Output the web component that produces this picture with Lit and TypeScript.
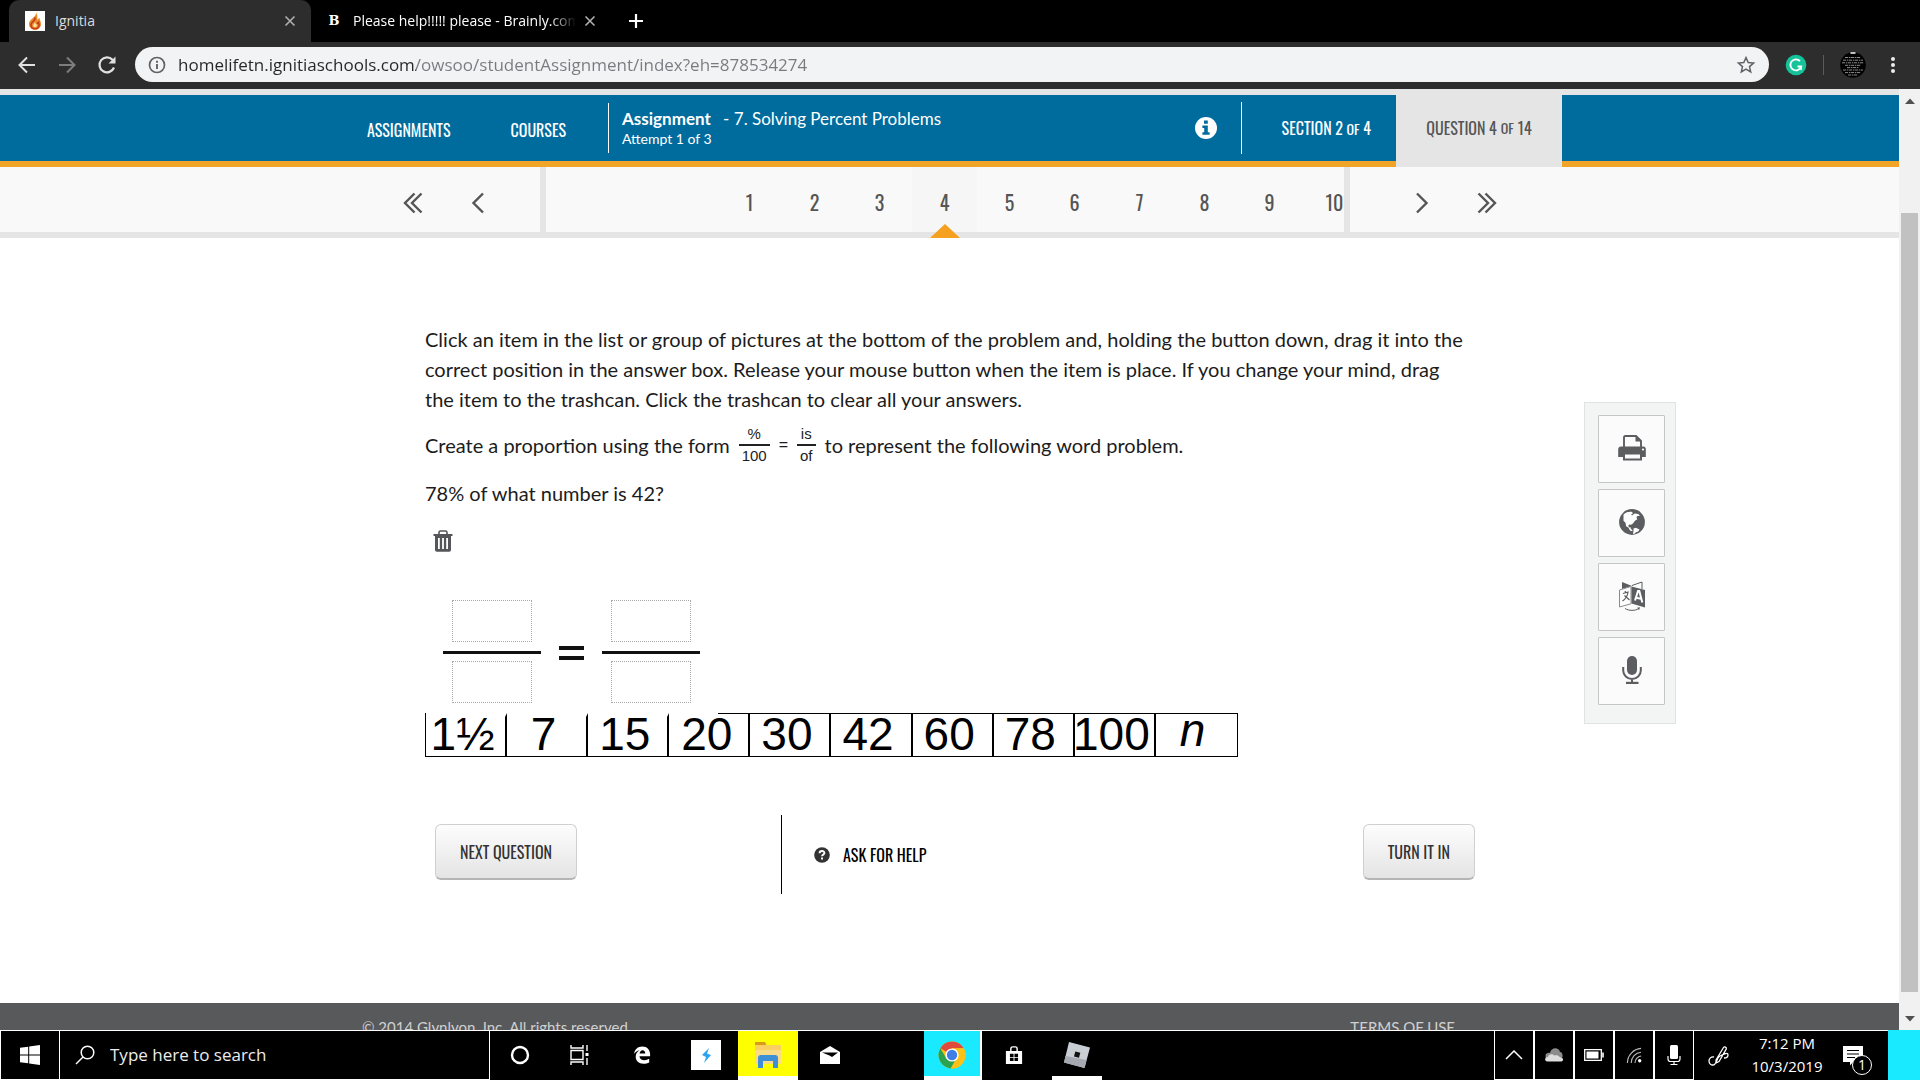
import { LitElement, html, css, svg, nothing } from "lit";
import { customElement, state } from "lit/decorators.js";
import { classMap } from "lit/directives/class-map.js";

const arrowBack = svg`<svg viewBox="0 0 20 20" width="20" height="20" aria-hidden="true"><path d="M18 10H3M10 2.5 2.5 10l7.500 7.500" fill="none" stroke="currentColor" stroke-width="2"/></svg>`;
const arrowForward = svg`<svg viewBox="0 0 20 20" width="20" height="20" aria-hidden="true"><path d="M2 10h15M10 2.500 17.500 10 10 17.500" fill="none" stroke="currentColor" stroke-width="2"/></svg>`;
const reload = svg`<svg viewBox="0 0 20 20" width="20" height="20" aria-hidden="true"><path d="M17 12.500A7.500 7.500 0 1 1 15.500 4.700L17 6.500" fill="none" stroke="currentColor" stroke-width="2.200"/><path d="M18.500 1.500v7h-7z" fill="currentColor"/></svg>`;
const cross = svg`<svg viewBox="0 0 12 12" width="12" height="12" aria-hidden="true"><path d="M1.500 1.500l9 9M10.500 1.500l-9 9" fill="none" stroke="currentColor" stroke-width="1.600"/></svg>`;
const plus = svg`<svg viewBox="0 0 16 16" width="16" height="16" aria-hidden="true"><path d="M8 1v14M1 8h14" fill="none" stroke="currentColor" stroke-width="2.200"/></svg>`;
const siteInfo = svg`<svg viewBox="0 0 18 18" width="18" height="18" aria-hidden="true"><circle cx="9" cy="9" r="7.500" fill="none" stroke="#5f6368" stroke-width="1.700"/><path d="M9 8v5M9 4.800v1.900" stroke="#5f6368" stroke-width="1.900"/></svg>`;
const star = svg`<svg viewBox="0 0 20 20" width="20" height="20" aria-hidden="true"><path d="M10 2.500l2.200 5 5.400.500-4.100 3.600 1.200 5.300L10 14.100l-4.700 2.800 1.200-5.300L2.400 8l5.400-.500z" fill="none" stroke="#5f6368" stroke-width="1.500"/></svg>`;
const flame = svg`<svg viewBox="0 0 20 20" width="20" height="20" aria-hidden="true"><path d="M0 0h20v20H0z" fill="#fff"/><path d="M11 1.500C12 6 4 7.500 4 13c0 3.500 2.700 5.800 6 5.800s6-2.300 6-5.800c0-2.600-1.500-4-1.500-6-1.200.500-2 1.500-2 2.800C12 7 13 4 11 1.500z" fill="#e88a2c"/><path d="M9.500 6.500c2.500 3-3.500 3.500-3.500 7.500 0 2 1.600 3.800 4 3.800s4.100-1.700 4.100-3.800c0-1.100-.600-1.800-.600-2.800-.900.400-1.200 1-1.200 1.900" fill="none" stroke="#c63f1d" stroke-width="1.600"/><path d="M10 11c0 1.300-1.700 1.800-1.700 3.400a1.800 1.800 0 0 0 3.600 0c0-1-1.900-1.800-1.900-3.400z" fill="#f9e3a0"/></svg>`;
const grammarly = svg`<svg viewBox="0 0 22 22" width="22" height="22" aria-hidden="true"><circle cx="11" cy="11" r="10.300" fill="#15c39a"/><path d="M15 7.200A5.500 5.500 0 1 0 16.200 12.500H12.500" fill="none" stroke="#fff" stroke-width="1.800"/><path d="M16.800 12v4.500l-3.300-2z" fill="#fff"/></svg>`;
const avatar = svg`<svg viewBox="0 0 26 26" width="26" height="26" aria-hidden="true"><circle cx="13" cy="13" r="12.800" fill="#000"/><path d="M10.500 1h5" stroke="#fff" stroke-width="1.500"/><path d="M5 5.500h16M3 8.200h20M2 10.800h22M5 13.300h16M7 15.600h12M3 18h20M5 20.600h16M8 23h10" stroke="#9a9a9a" stroke-width=".9" stroke-dasharray="3 .8 1.600 .6"/></svg>`;
const dots = svg`<svg viewBox="0 0 6 20" width="6" height="20" aria-hidden="true"><g fill="#ededed"><circle cx="3" cy="4" r="2"/><circle cx="3" cy="10" r="2"/><circle cx="3" cy="16" r="2"/></g></svg>`;

const infoDot = svg`<svg viewBox="0 0 22 22" width="22" height="22" aria-hidden="true"><circle cx="11" cy="11" r="11" fill="#fff"/><path d="M9 3.600h3.800v3.200H9zM7.400 8.500h5.400v6.800h1.800v2.400H7.400v-2.400h1.800V11H7.400z" fill="#006c9e"/></svg>`;
const chevrons = (n: number, flip: boolean) => svg`<svg viewBox="0 0 20 22" width="20" height="22" aria-hidden="true"><g fill="none" stroke="#555" stroke-width="2.400" transform=${flip ? "matrix(-1 0 0 1 20 0)" : "matrix(1 0 0 1 0 0)"}>${n === 2
  ? svg`<path d="M11.500 1.500 2 11l9.500 9.500M18.500 1.500 9 11l9.500 9.500"/>`
  : svg`<path d="M15 1.500 5.500 11l9.500 9.500"/>`}</g></svg>`;
const trash = svg`<svg viewBox="0 0 20 22" width="20" height="22" aria-hidden="true"><path d="M6 4V2.500C6 1.500 6.500 1 7.500 1h5c1 0 1.500.500 1.500 1.500V4" fill="none" stroke="#55565a" stroke-width="1.600"/><path d="M.5 4h19v2h-19z" fill="#55565a"/><path d="M2 6h16v14a1.800 1.800 0 0 1-1.800 1.800H3.800A1.800 1.800 0 0 1 2 20zM5 8v11h1.800V8zm4.100 0v11h1.800V8zm4.100 0v11H15V8z" fill="#55565a" fill-rule="evenodd"/></svg>`;
const helpDot = svg`<svg viewBox="0 0 16 16" width="16" height="16" aria-hidden="true"><circle cx="8" cy="8" r="7.800" fill="#333"/><path d="M5.600 6.300C5.600 3.300 10.400 3.300 10.400 6 10.400 7.700 8 7.500 8 9.300" fill="none" stroke="#fff" stroke-width="1.900"/><path d="M7 10.600h2v2H7z" fill="#fff"/></svg>`;

const printer = svg`<svg viewBox="0 0 28 26" width="28" height="26" aria-hidden="true"><path d="M6 12V2.200C6 1.500 6.500 1 7.200 1H18l5 5v6" fill="none" stroke="#5c5d60" stroke-width="1.900"/><path d="M17.500 1v5.500H23z" fill="#5c5d60"/><path d="M3 11.500h22.500c1.300 0 2.300 1 2.300 2.300V22H24v3.500H5V22H.2v-7.700c0-1.600 1.200-2.800 2.800-2.800zM7 19.500v4h15v-4z" fill="#5c5d60" fill-rule="evenodd"/><circle cx="25" cy="14.500" r="1.100" fill="#fff"/></svg>`;
const globe = svg`<svg viewBox="0 0 26 26" width="26" height="26" aria-hidden="true"><circle cx="13" cy="13" r="12.900" fill="#5c5d60"/><path d="M4.500 5.500C7 3 10 2.500 12.500 2.800l1.700 1.400-2 1 .8 1.300 2.600-2 3.800.600 1.500 2-2.500-.2-1 1.800 1 1.500-2.200 1.300-2.300 3-1.700 1.300-1.700-.3-1.300 1.300.8 1.400 1.700.2.200 1.600 1.500 1-.2 1.300L11 21.500l-1.600-3-2.300-1.200-.6-3.500-2-2z" fill="#fff"/><path d="M14.500 19.500l2.500-.8 2.300 1.300 1.200.2-1.300 2.300-2.200.8-1.500 1.400-1.500.3.500-3z" fill="#fff"/></svg>`;
const translate = svg`<svg viewBox="0 0 28 30" width="28" height="30" aria-hidden="true"><path d="M4 1l10 4-10 3z" fill="#5c5d60"/><path d="M14 4.500 24 1v7" fill="none" stroke="#5c5d60"/><path d="M1.500 9 13 5.500v17.300L1.500 26z" fill="#fff" stroke="#8a8b8d"/><path d="M13.500 5.500 27 9v17.500l-13.500-4z" fill="#5c5d60"/><path d="M5 12.500l5-1.500c-.5 4-2.500 7-5.500 9M7 10l.8 2M6.500 14.500l5 4.500" fill="none" stroke="#5c5d60" stroke-width="1.200"/><path d="M17 19.500l3-9.500h1.300l3 11.500M18 16.800l5 1" fill="none" stroke="#fff" stroke-width="2"/><path d="M7 27.500c4 2.500 10 2.500 14 0" fill="none" stroke="#5c5d60"/><path d="M19 26.800l3-.6-.8 2.800z" fill="#5c5d60"/></svg>`;
const microphone = svg`<svg viewBox="0 0 20 28" width="20" height="28" aria-hidden="true"><rect x="5" y="0" width="10" height="19" rx="5" fill="#5c5d60"/><path d="M1.200 11v3.500a8.800 8.400 0 0 0 17.600 0V11M10 23v4" fill="none" stroke="#5c5d60" stroke-width="2"/><path d="M4 25.800h12.500V28H4z" fill="#5c5d60"/></svg>`;

const scrollArrow = (d: string) => svg`<svg viewBox="0 0 10 6" width="10" height="6" aria-hidden="true"><path d=${d} fill="#505050"/></svg>`;

const windows = svg`<svg viewBox="0 0 20 20" width="20" height="20" aria-hidden="true"><path d="M0 2.800 8.200 1.700v7.800H0zM9.200 1.500 20 0v9.500H9.200zM0 10.500h8.200v7.800L0 17.200zM9.200 10.500H20V20L9.200 18.500z" fill="#fff"/></svg>`;
const magnifier = svg`<svg viewBox="0 0 20 20" width="20" height="20" aria-hidden="true"><circle cx="12.500" cy="7.500" r="6.300" fill="none" stroke="#fff" stroke-width="1.500"/><path d="M8 12 1 19" stroke="#fff" stroke-width="1.500"/></svg>`;
const cortana = svg`<svg viewBox="0 0 20 20" width="20" height="20" aria-hidden="true"><circle cx="10" cy="10" r="8" fill="none" stroke="#fff" stroke-width="2.400"/></svg>`;
const taskView = svg`<svg viewBox="0 0 22 20" width="22" height="20" aria-hidden="true"><path d="M2 0v3h12V0M2 20v-3h12v3M2 5.500h12v9H2zM18 0v6M18 13v7" fill="none" stroke="#fff" stroke-width="1.400"/><path d="M16.500 8h3v3h-3z" fill="#fff"/></svg>`;
const edge = svg`<svg viewBox="0 0 20 20" width="18" height="18" aria-hidden="true"><path d="M1 9C2 3.500 5.500.5 10.300.5c5.500 0 8.700 3.800 8.700 8.700v2.300H7.200c.2 3 2.500 4.300 5.400 4.300 2 0 3.800-.5 5.400-1.500v3.900c-1.800 1-4 1.500-6.400 1.500C6.400 19.700 3 16.500 3 12c0-3 1.500-5.600 4.200-7.200C4.500 5.300 2.200 7 1 9zm6.400-.8h6.200c0-2.200-1-3.600-3-3.600-1.800 0-2.900 1.500-3.200 3.600z" fill="#fff"/></svg>`;
const bolt = svg`<svg viewBox="0 0 30 30" width="30" height="30" aria-hidden="true"><path d="M0 0h30v30H0z" fill="#fff"/><path d="M18 8l-7 7 4 2-2 6 7-8-4-1.500z" fill="#2fa4ee"/></svg>`;
const folder = svg`<svg viewBox="0 0 28 26" width="28" height="26" aria-hidden="true"><path d="M1 0h10l2 4h-12z" fill="#d99a1c"/><path d="M1 3h26v19H1z" fill="#f8cf60"/><path d="M1 8h26v14H1z" fill="#fbdc86"/><path d="M4 26V16c0-2 1-3 3-3h14c2 0 3 1 3 3v10h-5v-7H9v7z" fill="#3d8fd6"/></svg>`;
const mail = svg`<svg viewBox="0 0 20 18" width="20" height="18" aria-hidden="true"><path d="M0 6 10 0l10 6v12H0z" fill="#fff"/><path d="M2 6.500h16L12 11l-2.500-1.500z" fill="#000"/></svg>`;
const chrome = svg`<svg viewBox="0 0 28 28" width="28" height="28" aria-hidden="true"><circle cx="14" cy="14" r="13.500" fill="#fbc116"/><path d="M14 14 2.300 7.250A13.500 13.500 0 0 1 25.700 7.250H14z" fill="#de4a3b"/><path d="M2.300 7.250A13.500 13.500 0 0 0 12.500 27.400L19 16.500 14 20 8.500 17.500z" fill="#2aa24f"/><path d="M25.700 7.250H14L20 14l-6.500 13.500A13.500 13.500 0 0 0 25.700 7.250z" fill="#fbc116"/><circle cx="14" cy="14" r="6.600" fill="#fff"/><circle cx="14" cy="14" r="5.200" fill="#3f7ee8"/></svg>`;
const store = svg`<svg viewBox="0 0 20 20" width="18" height="20" aria-hidden="true"><path d="M6.500 6V3c0-1.200.8-2 2-2h3c1.200 0 2 .8 2 2v3" fill="none" stroke="#fff" stroke-width="1.600"/><path d="M1 5.500h18V20H1zM5.500 8.500v3.600h4V8.500zm5 0v3.600h4V8.500zm-5 4.600v3.600h4v-3.600zm5 0v3.600h4v-3.600z" fill="#fff" fill-rule="evenodd"/></svg>`;
const roblox = svg`<svg viewBox="0 0 28 28" width="28" height="28" aria-hidden="true"><path d="M6 1l21 5.500L21.500 27 1 21.500z" fill="#c9cdd4"/><path d="M1 21.500 21.500 27l2-8-21-4z" fill="#a4a9b2"/><path d="M12.300 10.500l5 1.300-1.300 5-5-1.300z" fill="#111"/></svg>`;

const trayUp = svg`<svg viewBox="0 0 18 10" width="18" height="10" aria-hidden="true"><path d="M1 9l8-8 8 8" fill="none" stroke="#fff" stroke-width="1.500"/></svg>`;
const cloud = svg`<svg viewBox="0 0 20 14" width="20" height="14" aria-hidden="true"><path d="M2 10C0 6 4 4 6 5c1-6 9-6 10-1 3 0 3 5 2 6z" fill="#8c8c8c"/><path d="M3 13.500c-3-1-2-5 1-4.500C5 5.500 9 6 10 7.500c5-1 5 2 8 2.500 2 1 1 3.500-1 3.500z" fill="#ddd"/></svg>`;
const battery = svg`<svg viewBox="0 0 20 12" width="20" height="12" aria-hidden="true"><path d="M.7.700h16.600v10.600H.7z" fill="none" stroke="#fff" stroke-width="1.300"/><path d="M2.500 2.500h12v7h-12zM18.200 3.500h1.600v5h-1.600z" fill="#fff"/></svg>`;
const wifi = svg`<svg viewBox="0 0 18 18" width="17" height="17" aria-hidden="true"><path d="M1.500 17A15.500 15.500 0 0 1 16 1.500M5.500 17A11.500 11.500 0 0 1 16 5.500M9.500 17A7.500 7.500 0 0 1 16 9.500" fill="none" stroke="#bbb" stroke-width="1.200"/><circle cx="14.500" cy="14.500" r="1.800" fill="#fff"/></svg>`;
const trayMic = svg`<svg viewBox="0 0 14 20" width="14" height="20" aria-hidden="true"><rect x="3" y="0" width="8" height="14" rx="1.500" fill="#fff"/><path d="M1 11v3c0 1.500 1 2.500 2.500 2.500h7c1.500 0 2.500-1 2.500-2.500v-3M7 16.500V20M3.500 19.500h7" fill="none" stroke="#fff" stroke-width="1.200"/></svg>`;
const pen = svg`<svg viewBox="0 0 22 22" width="22" height="22" aria-hidden="true"><path d="M8 15 15.500 2.500c1-1.500 3.500 0 2.700 1.700L11 16.500 8 18zM6 12c-3-.5-5 1.500-5 4s2 4 4 4c4 0 3-7 7-9s8-4 8-1-3 3-4 3" fill="none" stroke="#fff" stroke-width="1.300"/></svg>`;
const note = svg`<svg viewBox="0 0 20 20" width="20" height="20" aria-hidden="true"><path d="M0 0h20v16H10l-3 3.500V16H0z" fill="#fff"/><path d="M4 4.500h12M4 8h12M4 11.500h8" stroke="#000" stroke-width="1.200"/></svg>`;

const TILES = ["1½", "7", "15", "20", "30", "42", "60", "78", "100", "n"];
const TOOLS = [
  { label: "Print", icon: printer },
  { label: "Web", icon: globe },
  { label: "Translate", icon: translate },
  { label: "Record", icon: microphone },
];
const TRAY = [
  { label: "Show hidden icons", icon: trayUp },
  { label: "Cloud storage", icon: cloud },
  { label: "Battery", icon: battery },
  { label: "Network", icon: wifi },
  { label: "Microphone", icon: trayMic },
];
const APPS = [
  { label: "Cortana", icon: cortana, kind: "plain" },
  { label: "Task view", icon: taskView, kind: "plain" },
  { label: "Edge", icon: edge, kind: "wide" },
  { label: "Lightning", icon: bolt, kind: "wide" },
  { label: "File Explorer", icon: folder, kind: "yellow" },
  { label: "Mail", icon: mail, kind: "wide" },
  { label: "", icon: nothing, kind: "gap" },
  { label: "Chrome", icon: chrome, kind: "cyan" },
  { label: "Store", icon: store, kind: "wide" },
  { label: "Roblox", icon: roblox, kind: "running" },
];

const reset = css`
  *, *::before, *::after { box-sizing: border-box; }
  button { font: inherit; color: inherit; background: none; border: 0; padding: 0; margin: 0; cursor: pointer; }
  a { color: inherit; text-decoration: none; }
  svg { display: block; flex: none; }
`;

@customElement("browser-chrome")
export class BrowserChrome extends LitElement {
  static styles = [reset, css`
    :host { display: block; flex: none; font: 15px/20px "Open Sans", "Noto Sans", sans-serif; color: #fff; }
    .tabs { display: flex; height: 42px; background: #000; padding-left: 9px; }
    .tab { display: flex; align-items: center; padding: 0 16px; width: 302px; gap: 10px; }
    .tab.active { background: #2d2d2d; border-radius: 10px 10px 0 0; color: #dcdcdc; padding-right: 15px; }
    .tab.other { width: 301px; gap: 12px; margin-right: 16px; }
    .title { flex: 1; overflow: hidden; white-space: nowrap; font-size: 14px; }
    .fade { -webkit-mask-image: linear-gradient(to right, #000 88%, transparent); mask-image: linear-gradient(to right, #000 88%, transparent); }
    .close { color: #b0b0b0; }
    .other .close { margin-left: -4px; }
    .brand { font: bold 13px/20px "DejaVu Serif", serif; width: 14px; text-align: center; }
    .bar { display: flex; align-items: center; height: 47px; background: #2d2d2d; padding: 0 24px 2px 17px; }
    .nav { display: flex; gap: 20px; color: #e0e0e0; padding-right: 18px; }
    .dim { color: #7d7d7d; }
    .address { flex: 1; display: flex; align-items: center; gap: 12px; height: 35px; border-radius: 18px; background: #f1f3f4; padding: 0 13px; margin: 0 16px 0 0; }
    .url { flex: 1; min-width: 0; font: 17px/24px "Open Sans", "Noto Sans", sans-serif; border: 0; outline: 0; padding: 0; -webkit-text-fill-color: transparent; background: linear-gradient(to right, #24262a 238px, #777b80 238px); -webkit-background-clip: text; background-clip: text; }
    .ext { display: flex; align-items: center; gap: 16px; }
    .rule { width: 1px; height: 20px; background: #5a5a5a; }
    .menu { margin-left: 8px; }
  `];
  render() {
    return html`
      <div class="tabs">
        <div class="tab active">${flame}<span class="title">Ignitia</span><button class="close" aria-label="Close tab">${cross}</button></div>
        <div class="tab other"><span class="brand">B</span><span class="title fade">Please help!!!!! please - Brainly.com</span><button class="close" aria-label="Close tab">${cross}</button></div>
        <button aria-label="New tab">${plus}</button>
      </div>
      <div class="bar">
        <div class="nav">
          <button aria-label="Back">${arrowBack}</button>
          <button class="dim" aria-label="Forward">${arrowForward}</button>
          <button aria-label="Reload">${reload}</button>
        </div>
        <div class="address">
          ${siteInfo}
          <input class="url" aria-label="Address" value="homelifetn.ignitiaschools.com/owsoo/studentAssignment/index?eh=878534274">
          <button aria-label="Bookmark">${star}</button>
        </div>
        <div class="ext">
          <button aria-label="Grammarly">${grammarly}</button>
          <span class="rule"></span>
          <button aria-label="Profile">${avatar}</button>
          <button class="menu" aria-label="Menu">${dots}</button>
        </div>
      </div>`;
  }
}

@customElement("assignment-header")
export class AssignmentHeader extends LitElement {
  static styles = [reset, css`
    :host { display: block; flex: none; font: 16px/24px Oswald, "Roboto Condensed", sans-serif; }
    .blue { background: linear-gradient(#e5e5e5 6px, #006c9e 6px, #006c9e 72px, #f0a428 72px); display: flex; justify-content: center; height: 78px; }
    .wrap { width: 1225px; display: flex; align-items: center; color: #fff; }
    .link { padding: 3px 30px 0; }
    .info { border-left: 1px solid #fff; padding-left: 13px; height: 50px; margin-left: 12px; flex: 1; font-family: Lato, sans-serif; font-size: 17px; line-height: 24px; }
    .info p { margin: 4px 0 0; }
    .info b { margin-right: 8px; }
    .info small { display: block; font-size: 14px; line-height: 16px; }
    .more { padding-right: 24px; height: 52px; border-right: 1px solid #fff; }
    .section { padding: 0 25px 0 40px; }
    .small { font-size: 14px; }
    .question { align-self: stretch; display: flex; align-items: center; gap: 4px; background: #e5e5e5; color: #555; width: 166px; justify-content: center; }
    .pager { display: flex; justify-content: center; background: #f9f9f9; border-bottom: 6px solid #e5e5e5; height: 71px; }
    .row { width: 1225px; display: flex; align-items: stretch; color: #555; }
    .ends { display: flex; align-items: center; gap: 45px; padding-top: 6px; }
    .first { width: 203px; padding-left: 66px; }
    .last { padding-left: 62px; }
    .numbers { display: flex; width: 810px; border: solid #e5e5e5; border-width: 0 6px; padding-left: 171px; }
    .clip { display: flex; overflow: clip; overflow-clip-margin: 6px; flex: 1; }
    .num { position: relative; flex: none; width: 65px; font-size: 20px; padding-top: 4px; }
    .num.on { background: #f6f6f6; }
    .num.on::after { content: ""; position: absolute; left: 18px; bottom: -6px; border: solid transparent; border-width: 0 15px 14px; border-bottom-color: #f5a11f; }
  `];
  @state() private current = 4;
  render() {
    const numbers = Array.from({ length: 10 }, (_, i) => i + 1);
    return html`
      <header class="blue"><div class="wrap">
        <a class="link" href="#assignments">ASSIGNMENTS</a>
        <a class="link" href="#courses">COURSES</a>
        <div class="info"><p><b>Assignment</b> - 7. Solving Percent Problems</p><small>Attempt 1 of 3</small></div>
        <button class="more" aria-label="Assignment information">${infoDot}</button>
        <a class="section" href="#section">SECTION 2 <span class="small">OF</span> 4</a>
        <a class="question" href="#question">QUESTION ${this.current} <span class="small">OF</span> 14</a>
      </div></header>
      <nav class="pager" aria-label="Questions"><div class="row">
        <div class="ends first">
          <button aria-label="First question">${chevrons(2, false)}</button>
          <button aria-label="Previous question">${chevrons(1, false)}</button>
        </div>
        <div class="numbers"><div class="clip">
          ${numbers.map((n) => html`<button class=${classMap({ num: true, on: n === this.current })} @click=${() => { this.current = n; }}>${n}</button>`)}
        </div></div>
        <div class="ends last">
          <button aria-label="Next question">${chevrons(1, true)}</button>
          <button aria-label="Last question">${chevrons(2, true)}</button>
        </div>
      </div></nav>`;
  }
}

@customElement("problem-view")
export class ProblemView extends LitElement {
  static styles = [reset, css`
    :host { flex: 1; display: grid; grid-template-columns: 1fr 1225px 1fr; background: #fff; color: #1c1c1c; font: 20px/30px Lato, sans-serif; }
    .problem { grid-column: 2; width: 1138px; padding: 86px 0 0 88px; }
    p { margin: 0; max-width: 1044px; }
    .form { display: flex; align-items: center; margin: 10px 0 12px; gap: 9px; height: 42px; }
    .ratio { display: flex; flex-direction: column; align-items: center; font: 15px/20px "Liberation Sans", sans-serif; }
    .ratio span { padding: 0 3px; }
    .ratio span:first-child { border-bottom: 2px solid #222; align-self: stretch; text-align: center; }
    .eq { font: 16px/20px "Liberation Sans", sans-serif; }
    .trash { display: block; margin: 22px 0 48px 8px; }
    .answer { display: flex; align-items: center; gap: 18px; padding-left: 18px; margin-bottom: 10px; }
    .frac { display: grid; justify-items: center; width: 98px; }
    .slot { width: 80px; height: 42px; border: 1px dotted #aaa; }
    .bar { width: 98px; height: 3px; margin: 9px 0 7px; background: #111; }
    .equals { width: 25px; height: 14px; border: solid #111; border-width: 4px 0; margin-top: 2px; }
    .tiles { display: grid; grid-template-columns: repeat(10, minmax(0, 1fr)); width: 813px; height: 44px; border: 1px solid #000; }
    .tile { display: flex; justify-content: center; padding-right: 6px; border-right: 2px solid #000; font: 46px/40px "Liberation Sans", sans-serif; color: #000; background: #fff; }
    .tile:last-child { border-right: 0; font-style: italic; line-height: 32px; padding-right: 8px; }
    .bare { margin-top: -1px; border-top: 4px solid #fff; line-height: 34px; }
    .half { border-top: 1px solid; border-image: linear-gradient(to right, #fff 60%, #000 60%) 1; border-right: 0; box-shadow: inset -2px 0 #000; margin-top: -1px; }
    .actions { display: flex; align-items: flex-start; margin-top: 58px; padding-left: 10px; height: 79px; font: 16px/24px Oswald, "Roboto Condensed", sans-serif; }
    .push { height: 56px; margin-top: 9px; padding: 0 24px; border: 1px solid #d0d0d0; border-bottom: 2px solid #b5b5b5; border-radius: 6px; background: linear-gradient(#fdfdfd, #e4e4e4); color: #333; }
    .help { display: flex; align-items: center; gap: 13px; align-self: stretch; margin-left: 204px; padding-left: 32px; border-left: 1px solid #000; color: #000; }
    .turn { margin-left: auto; }
    .tools { grid-column: 3; justify-self: start; align-self: start; margin: 164px 0 0 22px; width: 92px; display: grid; gap: 6px; padding: 12px 10px 18px 13px; background: #f3f5f5; border: 1px solid #e0e3e3; }
    .tool { display: grid; place-items: center; height: 68px; border: 1px solid #c4c6c8; border-radius: 1px; background: #fbfbfb; padding-bottom: 2px; }
  `];
  render() {
    return html`
      <section class="problem">
        <p>Click an item in the list or group of pictures at the bottom of the problem and, holding the button down, drag it into the correct position in the answer box. Release your mouse button when the item is place. If you change your mind, drag the item to the trashcan. Click the trashcan to clear all your answers.</p>
        <div class="form">
          <span>Create a proportion using the form</span>
          <span class="ratio"><span>%</span><span>100</span></span>
          <span class="eq">=</span>
          <span class="ratio"><span>is</span><span>of</span></span>
          <span>to represent the following word problem.</span>
        </div>
        <p>78% of what number is 42?</p>
        <button class="trash" aria-label="Clear all answers">${trash}</button>
        <div class="answer">
          <div class="frac"><button class="slot" aria-label="Left numerator"></button><div class="bar"></div><button class="slot" aria-label="Left denominator"></button></div>
          <div class="equals"></div>
          <div class="frac"><button class="slot" aria-label="Right numerator"></button><div class="bar"></div><button class="slot" aria-label="Right denominator"></button></div>
        </div>
        <div class="tiles">
          ${TILES.map((t, i) => html`<button draggable="true" class=${classMap({ tile: true, bare: i < 3, half: i === 3 })}>${t}</button>`)}
        </div>
        <div class="actions">
          <button class="push">NEXT QUESTION</button>
          <button class="help">${helpDot}<span>ASK FOR HELP</span></button>
          <button class="push turn">TURN IT IN</button>
        </div>
      </section>
      <aside class="tools">
        ${TOOLS.map((t) => html`<button class="tool" aria-label=${t.label}>${t.icon}</button>`)}
      </aside>`;
  }
}

@customElement("task-bar")
export class TaskBar extends LitElement {
  static styles = [reset, css`
    :host { display: flex; flex: none; height: 50px; background: #000; color: #fff; font: 15px/23px "Open Sans", "Noto Sans", sans-serif; border-top: 1px solid #fff; }
    .start { width: 60px; border: solid #fff; border-width: 0 1px 1px; display: grid; place-items: center; }
    .search { display: flex; align-items: center; gap: 15px; width: 430px; padding: 0 15px; border: solid #fff; border-width: 0 1px 1px 0; }
    .search input { flex: 1; min-width: 0; background: none; border: 0; outline: 0; padding: 0; color: #fff; font: 17px/24px "Open Sans", "Noto Sans", sans-serif; }
    .search input::placeholder { color: #ececec; opacity: 1; }
    .apps { display: flex; flex: 1; }
    .app { display: grid; place-items: center; width: 60px; border-bottom: 4px solid transparent; padding-top: 2px; }
    .wide { width: 64px; }
    .gap { width: 62px; }
    .yellow, .cyan, .running { border-bottom-color: #fff; background-clip: padding-box; }
    .yellow { background-color: #ffff00; }
    .cyan { width: 58px; background-color: #19eaff; border-right: 2px solid #fff; }
    .running { width: 50px; margin-left: 6px; }
    .tray { display: flex; }
    .cell { width: 40px; display: grid; place-items: center; border: solid #fff; border-width: 0 1px 1px; }
    .ink { width: 50px; display: grid; place-items: center; }
    .clock { display: grid; align-content: center; text-align: center; width: 86px; padding-bottom: 2px; }
    .notes { position: relative; width: 58px; padding-left: 13px; }
    .badge { position: absolute; left: 22px; top: 24px; width: 20px; height: 20px; border: 1px solid #fff; border-radius: 50%; background: #000; font-size: 14px; line-height: 18px; text-align: center; }
    .show { width: 32px; background: #19eaff; margin-top: -1px; }
  `];
  render() {
    return html`
      <button class="start" aria-label="Start">${windows}</button>
      <label class="search">${magnifier}<input aria-label="Type here to search" placeholder="Type here to search"></label>
      <div class="apps">
        ${APPS.map((a) => a.kind === "gap"
          ? html`<span class="gap"></span>`
          : html`<button class="app ${a.kind}" aria-label=${a.label}>${a.icon}</button>`)}
      </div>
      <div class="tray">
        ${TRAY.map((t) => html`<button class="cell" aria-label=${t.label}>${t.icon}</button>`)}
        <button class="ink" aria-label="Ink workspace">${pen}</button>
        <div class="clock"><span>7:12 PM</span><span>10/3/2019</span></div>
        <button class="notes" aria-label="Notifications">${note}<span class="badge">1</span></button>
        <button class="show" aria-label="Show desktop"></button>
      </div>`;
  }
}

@customElement("app-root")
export class AppRoot extends LitElement {
  static styles = [reset, css`
    :host { display: flex; flex-direction: column; height: 100vh; overflow: hidden; }
    .viewport { flex: 1; min-height: 0; display: flex; overflow: hidden; }
    .page { flex: 1; min-width: 0; display: flex; flex-direction: column; overflow: hidden; }
    .footer { flex: none; display: flex; justify-content: center; height: 27px; overflow: hidden; background: #58595b; color: #d0d0d0; font: 15px/24px Lato, sans-serif; }
    .inner { width: 1175px; padding: 12px 82px 0 0; display: flex; justify-content: space-between; }
    .scroll { width: 21px; flex: none; background: #f1f1f1; display: flex; flex-direction: column; align-items: center; padding: 9px 0 8px; }
    .track { flex: 1; width: 17px; padding: 109px 0 24px; display: flex; }
    .thumb { flex: 1; background: #c1c1c1; }
  `];
  render() {
    return html`
      <browser-chrome></browser-chrome>
      <div class="viewport">
        <div class="page">
          <assignment-header></assignment-header>
          <problem-view></problem-view>
          <footer class="footer"><div class="inner"><span>© 2014 Glynlyon, Inc. All rights reserved.</span><a href="#terms">TERMS OF USE</a></div></footer>
        </div>
        <div class="scroll" aria-hidden="true">
          ${scrollArrow("M0 6 5 0.500 10 6z")}
          <div class="track"><div class="thumb"></div></div>
          ${scrollArrow("M0 0l5 5.500L10 0z")}
        </div>
      </div>
      <task-bar></task-bar>`;
  }
}
